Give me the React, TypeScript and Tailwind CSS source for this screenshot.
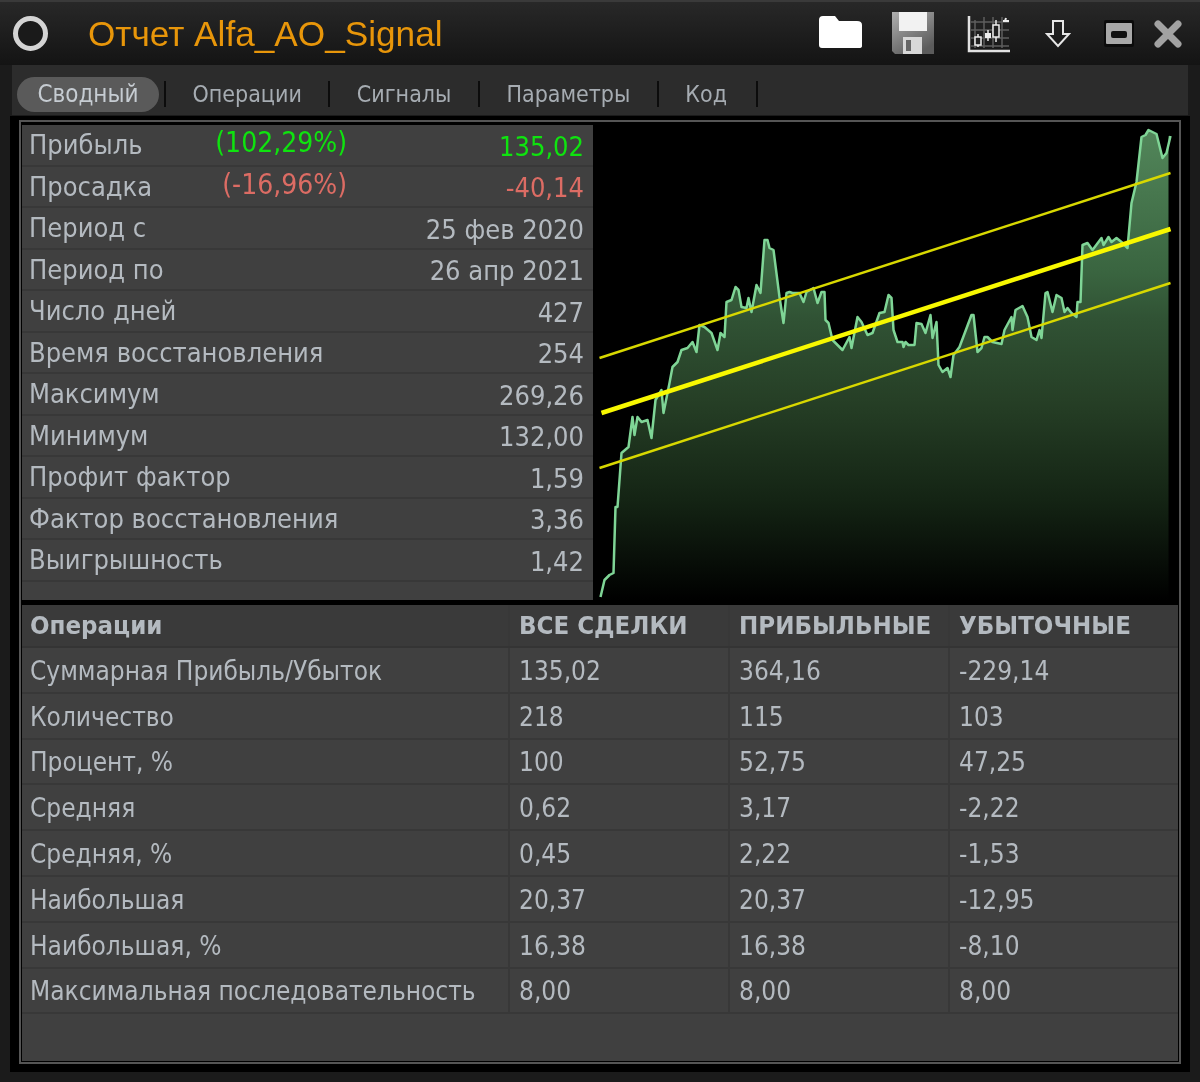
const PTS = "601,597 605,580 610,575 614,573 616,507 618,507 622,453 629,447 633,417 635,435 638,417 642,422 648,420 652,438 656,400 662,390 664,413 670,383 673,367 678,362 682,350 688,348 693,342 697,352 700,325 705,327 712,333 718,350 721,333 725,337 727,302 732,300 736,287 739,290 742,307 747,308 749,298 752,312 757,285 761,293 765,240 768,240 770,248 774,250 780,297 784,323 787,293 790,292 793,293 800,293 804,302 807,292 814,288 818,303 822,292 825,292 826,320 829,323 833,340 843,350 850,337 852,348 858,317 862,322 868,335 873,333 880,313 885,312 889,295 892,298 894,330 898,342 903,342 904,347 906,342 909,345 915,345 917,323 922,324 926,333 931,315 933,338 937,322 939,365 943,372 948,368 951,377 954,355 960,347 972,315 974,315 978,352 982,348 985,337 988,337 993,342 1002,344 1005,330 1012,317 1013,330 1016,310 1023,306 1028,317 1032,337 1037,340 1040,330 1042,338 1046,293 1048,292 1053,312 1057,295 1062,298 1065,312 1068,308 1072,313 1077,317 1078,302 1081,302 1083,245 1088,243 1093,250 1102,238 1104,245 1109,237 1112,242 1117,238 1122,242 1128,248 1132,203 1137,182 1142,137 1146,135 1149,130 1157,134 1163,158 1167,153 1171,136";

const SUMMARY: [string, string, string][] = [
  ["Прибыль", "(102,29%)", "135,02"],
  ["Просадка", "(-16,96%)", "-40,14"],
  ["Период с", "", "25 фев 2020"],
  ["Период по", "", "26 апр 2021"],
  ["Число дней", "", "427"],
  ["Время восстановления", "", "254"],
  ["Максимум", "", "269,26"],
  ["Минимум", "", "132,00"],
  ["Профит фактор", "", "1,59"],
  ["Фактор восстановления", "", "3,36"],
  ["Выигрышность", "", "1,42"],
];

const OPS: [string, string, string, string][] = [
  ["Суммарная Прибыль/Убыток", "135,02", "364,16", "-229,14"],
  ["Количество", "218", "115", "103"],
  ["Процент, %", "100", "52,75", "47,25"],
  ["Средняя", "0,62", "3,17", "-2,22"],
  ["Средняя, %", "0,45", "2,22", "-1,53"],
  ["Наибольшая", "20,37", "20,37", "-12,95"],
  ["Наибольшая, %", "16,38", "16,38", "-8,10"],
  ["Максимальная последовательность", "8,00", "8,00", "8,00"],
];

const TABS = ["Операции", "Сигналы", "Параметры", "Код"];

function Icons() {
  return (
    <div className="flex items-center ml-auto">
      <svg width="46" height="36" viewBox="0 0 46 36" className="mb-[4px] ml-[2px]">
        <path d="M1 6 Q1 2 5 2 H17 L21 7 H39 Q44 7 44 11 V32 Q44 34 41 34 H4 Q1 34 1 31 Z" fill="#fff" />
      </svg>
      <svg width="44" height="44" viewBox="0 0 44 44" className="ml-[27px] mb-[2px]">
        <defs>
          <linearGradient id="fl" x1="0" y1="0" x2="0.6" y2="1">
            <stop offset="0" stopColor="#b0b0b0" />
            <stop offset="1" stopColor="#5c5c5c" />
          </linearGradient>
        </defs>
        <path d="M1 1 H43 V43 H4 L1 40 Z" fill="url(#fl)" />
        <rect x="8" y="1" width="28" height="19" fill="#f2f2f2" />
        <rect x="12" y="26" width="19" height="17" fill="#d8d8d8" />
        <rect x="15" y="29" width="5" height="11" fill="#666" />
      </svg>
      <svg width="44" height="40" viewBox="0 0 44 40" className="ml-[32px]">
        <g stroke="#5e5e5e" strokeWidth="1.5" fill="none">
          <path d="M8 6 V34 M17 3 V34 M26 3 V34 M35 3 V34 M4 8 H42 M4 16 H42 M4 24 H42 M4 32 H42" />
        </g>
        <path d="M2 2 V37 H43" stroke="#e2e2e2" strokeWidth="2.5" fill="none" />
        <path d="M11 20 V33 M21 16 V27 M29 6 V28" stroke="#e8e8e8" strokeWidth="1.5" />
        <rect x="8" y="23" width="6" height="8" fill="#222" stroke="#eee" strokeWidth="1.5" />
        <rect x="18" y="19" width="6" height="5" fill="#eee" />
        <rect x="26" y="11" width="6" height="12" fill="#222" stroke="#eee" strokeWidth="1.5" />
        <path d="M36 7 H42 M38 7 L39 4" stroke="#eee" strokeWidth="2" />
      </svg>
      <svg width="26" height="30" viewBox="0 0 26 30" className="ml-[34px]">
        <path d="M8 2 H18 V15 H24 L13 27 L2 15 H8 Z" fill="none" stroke="#e6e6e6" strokeWidth="2" />
      </svg>
      <svg width="30" height="27" viewBox="0 0 30 27" className="ml-[33px]">
        <rect x="0" y="0" width="30" height="27" rx="2" fill="#0b0b0b" />
        <rect x="2" y="3" width="26" height="21" rx="1" fill="#a8a8a8" />
        <rect x="7" y="11" width="16" height="7" rx="2" fill="#111" />
      </svg>
      <svg width="30" height="30" viewBox="0 0 30 30" className="ml-[19px]">
        <path d="M5 5 L25 25 M25 5 L5 25" stroke="#a2a2a2" strokeWidth="7" strokeLinecap="round" />
      </svg>
    </div>
  );
}

function Chart() {
  return (
    <svg viewBox="597 122 581 478" className="flex-1 h-full min-w-0 bg-black block">
      <defs>
        <linearGradient id="area" x1="0" y1="130" x2="0" y2="600" gradientUnits="userSpaceOnUse">
          <stop offset="0" stopColor="#52865a" />
          <stop offset="0.3" stopColor="#3a6540" />
          <stop offset="0.404" stopColor="#305234" />
          <stop offset="0.574" stopColor="#263f26" />
          <stop offset="0.787" stopColor="#142414" />
          <stop offset="1" stopColor="#000" />
        </linearGradient>
      </defs>
      <polygon points={`601,600 ${PTS} 1169,136 1169,600`} fill="url(#area)" />
      <polyline points={PTS} fill="none" stroke="#7fd596" strokeWidth="2.5" strokeLinejoin="round" />
      <line x1="600" y1="358" x2="1171" y2="173" stroke="#d8d800" strokeWidth="2.5" />
      <line x1="602" y1="413" x2="1171" y2="229" stroke="#f8f800" strokeWidth="4.5" />
      <line x1="600" y1="468" x2="1171" y2="283" stroke="#d8d800" strokeWidth="2.5" />
    </svg>
  );
}

export default function App() {
  return (
    <div className="w-[1200px] h-[1082px] bg-[#1b1b1b] flex flex-col overflow-hidden text-[#b4bac0] font-['DejaVu_Sans_Condensed','DejaVu_Sans',sans-serif] [font-stretch:condensed] text-[26px] whitespace-nowrap border-t-[2px] border-[#3a3a3a] blur-[0.5px]">
      <div className="h-[63px] shrink-0 flex items-center pl-[13px] pr-[17px] bg-gradient-to-b from-[#282828] to-[#141414]">
        <div className="w-[35px] h-[35px] rounded-full border-[5px] border-[#d4d4d4] bg-[#1a1a1a]" />
        <span className="ml-[40px] font-['Liberation_Sans',sans-serif] text-[35.2px] text-[#e8960a] leading-none">Отчет Alfa_AO_Signal</span>
        <Icons />
      </div>
      <div className="h-[50px] shrink-0 ml-[12px] mr-[12px] bg-[#2c2c2c] flex items-center pl-[5px] pt-[8px] text-[23px] text-[#a6acb2]">
        <div className="h-[35px] w-[142px] rounded-full bg-[#5a5a5a] flex items-center justify-center text-[24px] text-[#c6ccd2]">Сводный</div>
        <div className="w-[2px] h-[26px] bg-[#0c0c0c] ml-[5px]" />
        {TABS.map((t) => (
          <div key={t} className="flex items-center [&:last-child>span]:pr-[29px]">
            <span className="px-[26.5px]">{t}</span>
            <div className="w-[2px] h-[26px] bg-[#0c0c0c]" />
          </div>
        ))}
      </div>
      <div className="mt-[1px] ml-[10px] mr-[10px] h-[956px] bg-black pt-[4px] px-[9px] pb-[8px]">
        <div className="h-full border-2 border-[#555] flex flex-col p-[1px] pt-0">
          <div className="h-[478px] shrink-0 flex">
            <div className="w-[571px] shrink-0 h-[475px] mt-[3px] bg-[#404040] flex flex-col text-[27px]">
              {SUMMARY.map(([a, b, c], i) => (
                <div key={a} className="h-[41.5px] shrink-0 flex items-center pl-[7px] pr-[9px] pt-[1px] border-b-2 border-[#383838]">
                  <span className="w-[185px]">{a}</span>
                  {b && (
                    <span className={`w-[133px] text-right text-[28px] pb-[4px] ${i === 0 ? "text-[#0fe30f]" : "text-[#dc6c64]"}`}>{b}</span>
                  )}
                  <span className={`ml-auto pt-[3px] ${i === 0 ? "text-[#0fe30f]" : i === 1 ? "text-[#dc6c64]" : ""}`}>{c}</span>
                </div>
              ))}
            </div>
            <div className="w-[3px] shrink-0" />
            <Chart />
          </div>
          <div className="mt-[5px] flex-1 bg-[#404040] flex flex-col">
            <div className="h-[43px] shrink-0 flex items-center font-bold text-[25.6px] bg-[#3a3a3a] border-b-2 border-[#343434]">
              <div className="w-[488px] h-full flex items-center pl-[8px] border-r-2 border-[#383838]">Операции</div>
              <div className="w-[220px] h-full flex items-center pl-[9px] border-r-2 border-[#383838]">ВСЕ СДЕЛКИ</div>
              <div className="w-[220px] h-full flex items-center pl-[9px] border-r-2 border-[#383838]">ПРИБЫЛЬНЫЕ</div>
              <div className="flex-1 h-full flex items-center pl-[9px]">УБЫТОЧНЫЕ</div>
            </div>
            {OPS.map((r) => (
              <div key={r[0]} className="h-[45.8px] shrink-0 flex items-center border-b-2 border-[#383838]">
                <div className="w-[488px] h-full flex items-center pl-[8px] pt-[3px] border-r-2 border-[#383838]">{r[0]}</div>
                <div className="w-[220px] h-full flex items-center pl-[9px] pt-[3px] border-r-2 border-[#383838]">{r[1]}</div>
                <div className="w-[220px] h-full flex items-center pl-[9px] pt-[3px] border-r-2 border-[#383838]">{r[2]}</div>
                <div className="flex-1 h-full flex items-center pl-[9px] pt-[3px]">{r[3]}</div>
              </div>
            ))}
          </div>
        </div>
      </div>
    </div>
  );
}
